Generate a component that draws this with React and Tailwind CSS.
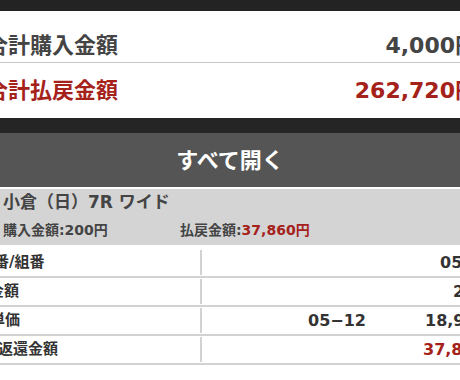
import React from 'react';

const font = { fontFamily: '"DejaVu Sans", "Noto Sans CJK JP", sans-serif' };

const rows = [
  { label: '馬番/組番', shift: 'ml-[-1px]', mid: '', value: '05-12', pad: 'pl-[60px]', red: false },
  { label: '購入金額', shift: 'ml-[-21px]', mid: '', value: '200円', pad: 'pl-[73px]', red: false },
  { label: '払戻単価', shift: 'ml-[-20px]', mid: '05−12', value: '18,930円', pad: 'pl-[45px]', red: false },
  { label: '返還金額', shift: 'ml-[18px]', mid: '', value: '37,860円', pad: 'pl-[43px]', red: true },
];

export default function App() {
  return (
    <div className="w-[460px] h-[380px] overflow-hidden bg-white" style={font}>
      <div className="ml-[-20px] w-[500px]">
        <div className="h-[11px] bg-[#232323] shadow-[0_1px_2px_rgba(0,0,0,0.4)]" />

        <div className="bg-white">
          <div className="h-[52px] flex items-center justify-between pl-[6px] pr-[3px] pt-[17px] border-b border-[#c8c8c8] text-[22px] font-bold text-[#444]">
            <span>合計購入金額</span>
            <span>4,000円</span>
          </div>
          <div className="h-[55px] flex items-center justify-between pl-[6px] pr-[3px] text-[22px] font-bold text-[#a5221b]">
            <span>合計払戻金額</span>
            <span>262,720円</span>
          </div>
        </div>

        <div className="h-[15px] bg-[#252525]" />

        <div className="h-[54px] bg-[#555555] flex items-center justify-center text-white text-[22px] font-bold">
          すべて開く
        </div>
        <div className="h-[2px] bg-white" />

        <div className="h-[56px] bg-[#d4d4d4] pl-[23px]">
          <div className="text-[17px] font-bold text-[#444] leading-[26px]">小倉（日）7R ワイド</div>
          <div className="flex text-[14px] font-bold text-[#444] leading-[26px] mt-[2px]">
            <span className="w-[177px]">購入金額:200円</span>
            <span>
              払戻金額:<span className="text-[#a5221b]">37,860円</span>
            </span>
          </div>
        </div>

        <div className="pt-[4px]">
          {rows.map((r) => (
            <div
              key={r.label}
              className="grid grid-cols-[222px_178px_1fr] h-[29px] border-b-2 border-[#d2d2d2] text-[15px] font-bold text-[#333]"
            >
              <div className="flex items-center border-r-2 border-[#d2d2d2] my-[1px] overflow-hidden">
                <span className={r.shift}>{r.label}</span>
              </div>
              <div className="flex items-center justify-end pr-[14px] text-[16px]">{r.mid}</div>
              <div className={`flex items-center whitespace-nowrap text-[16px] ${r.pad} ${r.red ? 'text-[#a5221b]' : ''}`}>
                {r.value}
              </div>
            </div>
          ))}
        </div>
      </div>
    </div>
  );
}
